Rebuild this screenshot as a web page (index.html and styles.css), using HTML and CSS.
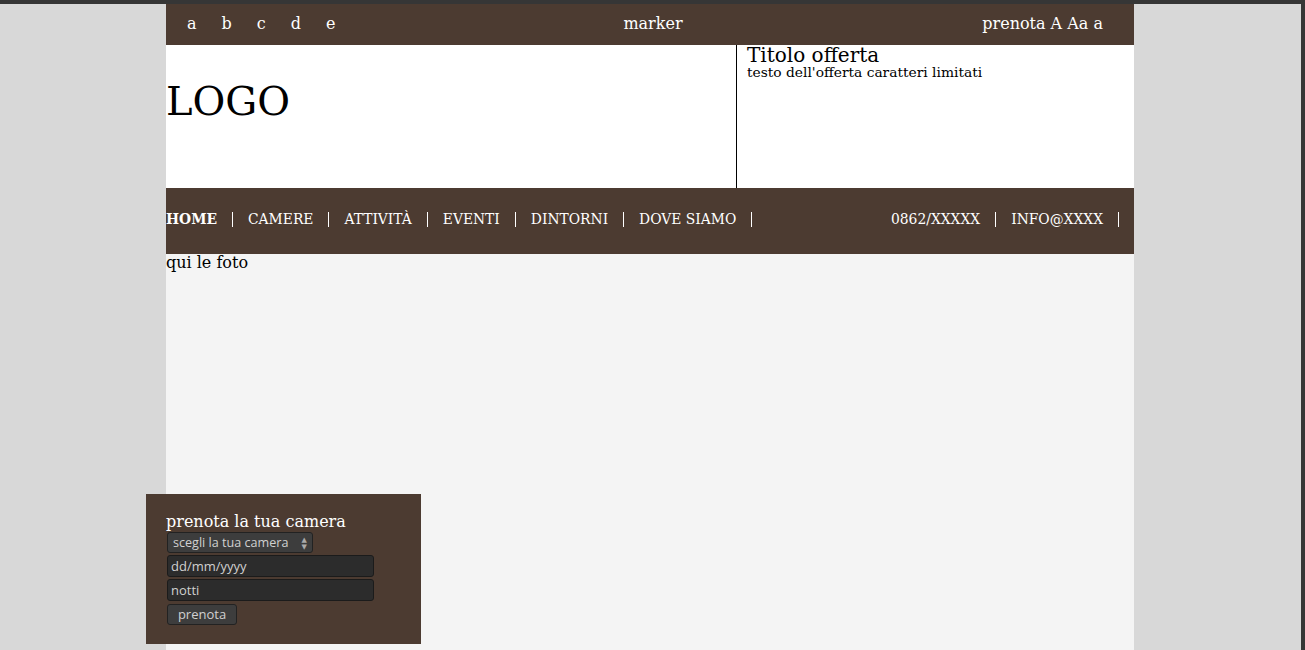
FILE: index.html
```html
<!DOCTYPE html>
<html lang="it">
<head>
<meta charset="utf-8">
<title>Hotel</title>
<link rel="stylesheet" href="styles.css">
</head>
<body>
<div class="page">
  <div class="topbar">
    <div class="letters"><span>a</span><span>b</span><span>c</span><span>d</span><span>e</span></div>
    <div class="marker">marker</div>
    <div class="tools">prenota A Aa a</div>
  </div>
  <div class="header">
    <div class="logo">LOGO</div>
    <div class="offer">
      <div class="offer-title">Titolo offerta</div>
      <div class="offer-text">testo dell'offerta caratteri limitati</div>
    </div>
  </div>
  <div class="nav">
    <ul class="menu">
      <li class="active">HOME</li>
      <li>CAMERE</li>
      <li>ATTIVITÀ</li>
      <li>EVENTI</li>
      <li>DINTORNI</li>
      <li>DOVE SIAMO</li>
    </ul>
    <ul class="menu contacts">
      <li>0862/XXXXX</li>
      <li>INFO@XXXX</li>
    </ul>
  </div>
  <div class="content">
    <div class="photos">qui le foto</div>
    <div class="booking">
      <div class="booking-title">prenota la tua camera</div>
      <div class="select">scegli la tua camera <span class="arrows"><span>▲</span><span>▼</span></span></div>
      <div class="input">dd/mm/yyyy</div>
      <div class="input">notti</div>
      <div class="button">prenota</div>
    </div>
  </div>
</div>
</body>
</html>
```

FILE: styles.css
```css
html, body {
  margin: 0;
  padding: 0;
  height: 100%;
}
body {
  background: #d8d8d8;
  border-top: 4px solid #363636;
  border-right: 4px solid #363636;
  box-sizing: border-box;
  font-family: "DejaVu Serif", serif;
  overflow: hidden;
}
.page {
  width: 968px;
  margin-left: 166px;
  height: 100%;
  display: flex;
  flex-direction: column;
}
.topbar {
  background: #4c3b31;
  color: #fff;
  height: 41px;
  display: flex;
  align-items: center;
  justify-content: space-between;
  padding: 0 31px 2px 21px;
  box-sizing: border-box;
  font-size: 16px;
}
.letters {
  display: flex;
  gap: 25px;
  width: 180px;
}
.marker {
  margin-left: 16px;
}
.tools {
  width: 180px;
  text-align: right;
}
.header {
  background: #fff;
  height: 143px;
  display: flex;
}
.logo {
  border-right: 1px solid #000;
  font-size: 40px;
  padding-top: 33px;
  box-sizing: border-box;
  width: 571px;
}
.offer {
  padding-left: 10px;
}
.offer-title {
  font-size: 20px;
  line-height: 20px;
}
.offer-text {
  font-size: 13.8px;
  line-height: 14px;
}
.nav {
  background: #4c3b31;
  height: 66px;
  display: flex;
  align-items: center;
  justify-content: space-between;
  color: #fff;
  font-size: 13.85px;
  padding-bottom: 3px;
  box-sizing: border-box;
}
.menu {
  list-style: none;
  margin: 0;
  padding: 0;
  display: flex;
}
.menu li {
  padding-right: 15px;
  margin-right: 15px;
  border-right: 1px solid #fff;
  line-height: 15px;
}
.menu .active {
  font-weight: bold;
}
.content {
  background: #f4f4f4;
  flex: 1;
  position: relative;
}
.photos {
  font-size: 16px;
  line-height: 18px;
}
.booking {
  position: absolute;
  left: -20px;
  top: 240px;
  width: 275px;
  height: 150px;
  box-sizing: border-box;
  background: #4c3b31;
  padding: 18px 20px 0 20px;
  color: #fff;
  font-family: "Open Sans", "DejaVu Sans", sans-serif;
}
.booking-title {
  font-family: "DejaVu Serif", serif;
  font-size: 16px;
  line-height: 20px;
}
.select, .input, .button {
  box-sizing: border-box;
  background: #2c2c2c;
  border: 1px solid #1b1b1b;
  border-radius: 3px;
  color: #d0d0d0;
  font-size: 12px;
  margin-left: 1px;
}
.select {
  width: 146px;
  height: 21px;
  display: flex;
  align-items: center;
  justify-content: space-between;
  padding: 0 5px 0 5px;
  background: #3d3d3d;
  border-color: #222;
  font-size: 12.6px;
}
.arrows {
  display: flex;
  flex-direction: column;
  font-size: 7px;
  line-height: 7px;
  color: #aaa;
}
.input {
  width: 207px;
  height: 22px;
  margin-top: 2px;
  padding: 0 3px;
  line-height: 20px;
  font-size: 13px;
}
.button {
  width: 70px;
  height: 21px;
  margin-top: 3px;
  background: #3d3d3d;
  border-color: #222;
  text-align: center;
  line-height: 19px;
  font-size: 13px;
}
```
